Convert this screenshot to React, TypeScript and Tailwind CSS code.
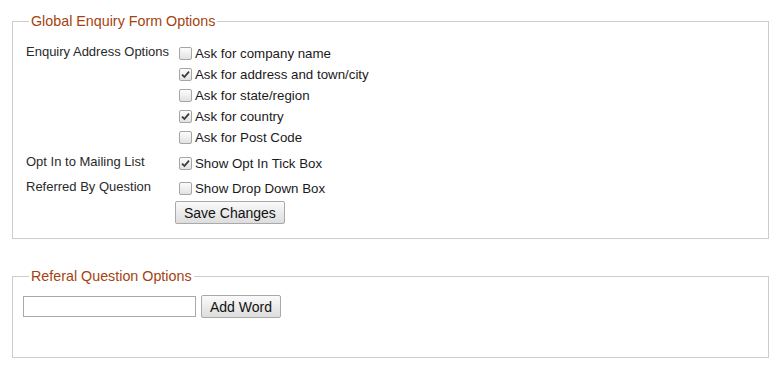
// Enquiry form settings panel

import React from 'react';

const addressOptions = [
  { label: 'Ask for company name', checked: false },
  { label: 'Ask for address and town/city', checked: true },
  { label: 'Ask for state/region', checked: false },
  { label: 'Ask for country', checked: true },
  { label: 'Ask for Post Code', checked: false },
];

function Tick({ checked }: { checked: boolean }) {
  return (
    <span className="w-[13px] h-[13px] shrink-0 rounded-[2px] border border-[#a6a6a6] bg-gradient-to-b from-[#fcfcfc] to-[#e2e2e2] flex items-center justify-center">
      {checked && (
        <svg width="9" height="9" viewBox="0 0 9 9">
          <path d="M1 4.6 L3.4 7 L8 1.6" fill="none" stroke="#3a3a3a" strokeWidth="1.8" />
        </svg>
      )}
    </span>
  );
}

function Option({ label, checked }: { label: string; checked: boolean }) {
  return (
    <label className="h-[21px] flex items-center gap-[3px] text-[13.3px] text-[#1a1a1a]">
      <Tick checked={checked} />
      <span>{label}</span>
    </label>
  );
}

function Button({ children }: { children: React.ReactNode }) {
  return (
    <button className="h-[23px] px-[8px] rounded-[2px] border border-[#a9a9a9] bg-gradient-to-b from-[#fafafa] to-[#dddddd] text-[14px] text-[#111] leading-none">
      {children}
    </button>
  );
}

export default function App() {
  return (
    <div className="min-h-screen bg-white pt-[12px] pl-[12px] font-['Liberation_Sans',Arial,sans-serif]">
      {/* Global options */}
      <fieldset className="w-[757px] border border-[#cccccc] px-[10px] pt-[13px] pb-[14px]">
        <legend className="ml-[6px] px-[2px] text-[14.3px] leading-[18px] text-[#a4430f]">
          Global Enquiry Form Options
        </legend>

        <div className="grid grid-cols-[153px_1fr] pl-[3px] text-[13px] text-[#2a2a2a]">
          <div className="leading-4 pt-[1px]">Enquiry Address Options</div>
          <div>
            {addressOptions.map((o) => (
              <Option key={o.label} label={o.label} checked={o.checked} />
            ))}
          </div>

          <div className="leading-4 pt-[1px] mt-[5px]">Opt In to Mailing List</div>
          <div className="mt-[5px]">
            <Option label="Show Opt In Tick Box" checked={true} />
          </div>

          <div className="leading-4 pt-[1px] mt-[4px]">Referred By Question</div>
          <div className="mt-[4px]">
            <Option label="Show Drop Down Box" checked={false} />
          </div>

          <div />
          <div className="-ml-[4px] mt-[2px]">
            <Button>Save Changes</Button>
          </div>
        </div>
      </fieldset>

      {/* Referral options */}
      <fieldset className="w-[757px] mt-[28px] border border-[#cccccc] px-[10px] pt-[10px] pb-[39px]">
        <legend className="ml-[6px] px-[2px] text-[14.3px] leading-[18px] text-[#a4430f]">
          Referal Question Options
        </legend>
        <div className="flex items-center gap-[5px]">
          <input className="w-[173px] h-[21px] border border-[#a9a9a9] px-1 text-[13px] outline-none" />
          <Button>Add Word</Button>
        </div>
      </fieldset>
    </div>
  );
}
